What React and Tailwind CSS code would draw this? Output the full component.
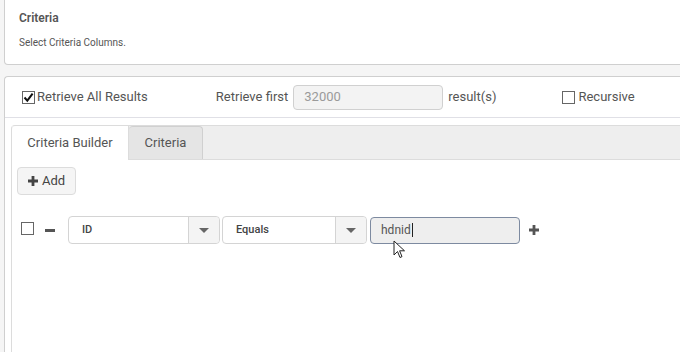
import { useState } from "react";

function Box({ checked }) {
  return (
    <span className="inline-flex h-[13px] w-[13px] shrink-0 items-center justify-center border border-[#666] bg-white">
      {checked && (
        <svg width="11" height="11" viewBox="0 0 11 11">
          <path d="M1.5 5.5 L4.3 8.6 L9.6 1.6" fill="none" stroke="#111" strokeWidth="2" />
        </svg>
      )}
    </span>
  );
}

function Caret() {
  return (
    <svg width="10" height="5" viewBox="0 0 10 5">
      <path d="M0 0 L10 0 L5 5 Z" fill="#666" />
    </svg>
  );
}

function Select({ label, width }) {
  return (
    <div
      className="flex h-[28px] items-stretch rounded-[4px] border border-[#d4d4d4] bg-white"
      style={{ width }}
    >
      <div className="flex flex-1 items-center pl-[13px] text-[11px] font-medium text-[#444]">{label}</div>
      <div className="flex w-[31px] items-center justify-center border-l border-[#d4d4d4] bg-[#f4f4f4] rounded-r-[4px]">
        <Caret />
      </div>
    </div>
  );
}

export default function App() {
  const [all, setAll] = useState(true);

  return (
    <div
      className="relative h-[352px] w-[680px] overflow-hidden bg-[#f5f5f5] text-[#555]"
      style={{ fontFamily: "Roboto, 'Liberation Sans', sans-serif" }}
    >
      {/* header card */}
      <div className="ml-[4px] mr-[-20px] h-[65px] rounded-b-[4px] border-x border-b border-[#cfcfcf] bg-white px-[14px] pt-[10px]">
        <div className="text-[12px] font-semibold leading-[16px] text-[#555]">Criteria</div>
        <div className="mt-[10px] text-[10px] leading-[14px] text-[#555]">Select Criteria Columns.</div>
      </div>

      {/* main card */}
      <div className="ml-[4px] mr-[-20px] mt-[11px] h-[300px] rounded-tl-[4px] border-l border-t border-[#cfcfcf] bg-white">
        <div className="flex h-[41px] items-center border-b border-[#e0e0e6] text-[13px] text-[#555]">
          <label className="ml-[17px] flex items-center gap-[2px]" onClick={() => setAll(!all)}>
            <Box checked={all} />
            <span>Retrieve All Results</span>
          </label>
          <span className="ml-[68px]">Retrieve first</span>
          <div className="ml-[5px] flex h-[25px] w-[150px] items-center rounded-[4px] border border-[#d0d0d0] bg-[#f3f3f3] pl-[10px] text-[#9a9a9a]">
            32000
          </div>
          <span className="ml-[5px] text-[#555]">result(s)</span>
          <label className="ml-[66px] flex items-center gap-[3px]">
            <Box checked={false} />
            <span>Recursive</span>
          </label>
        </div>

        {/* tabs container */}
        <div className="ml-[6px] mt-[7px] h-[260px] rounded-tl-[4px] border-l border-t border-[#dcdcdc]">
          <div className="flex h-[34px] border-b border-[#dcdcdc] bg-[#eeeeee]">
            <div className="mb-[-1px] flex w-[117px] items-center justify-center rounded-tl-[4px] border-r border-[#dcdcdc] bg-white text-[13px] text-[#555]">
              Criteria Builder
            </div>
            <div className="flex w-[74px] items-center justify-center rounded-t-[4px] border-r border-t border-[#d0d0d0] bg-[#e5e5e5] text-[13px] text-[#555]">
              Criteria
            </div>
          </div>

          <div className="px-[5px] pt-[7px]">
            <button className="flex h-[28px] w-[59px] items-center justify-center gap-[4px] rounded-[4px] border border-[#dcdcdc] bg-[#f5f5f5] text-[13px] text-[#444]">
              <svg width="10" height="10" viewBox="0 0 10 10">
                <path d="M3.6 0 H6.4 V3.6 H10 V6.4 H6.4 V10 H3.6 V6.4 H0 V3.6 H3.6 Z" fill="#444" />
              </svg>
              Add
            </button>

            <div className="mt-[21px] flex items-center">
              <span className="ml-[4px]"><Box checked={false} /></span>
              <span className="ml-[11px] h-[3px] w-[10px] bg-[#555]" />
              <div className="ml-[13px]"><Select label="ID" width={152} /></div>
              <div className="ml-[2px]"><Select label="Equals" width={145} /></div>
              <div className="ml-[3px] flex h-[27px] w-[150px] items-center rounded-[4px] border border-[#7d8aa0] bg-[#eeeeee] pl-[10px] text-[12px] text-[#555]">
                hdnid<span className="ml-[1px] h-[14px] w-[1px] bg-[#222]" />
              </div>
              <svg className="ml-[9px]" width="10" height="10" viewBox="0 0 10 10">
                <path d="M3.6 0 H6.4 V3.6 H10 V6.4 H6.4 V10 H3.6 V6.4 H0 V3.6 H3.6 Z" fill="#555" />
              </svg>
            </div>
          </div>
        </div>
      </div>

      {/* mouse pointer */}
      <svg className="absolute left-[393px] top-[240px]" width="14" height="20" viewBox="0 0 14 20">
        <path
          d="M1 1 L1 15 L4.5 11.5 L7 17.5 L9 16.6 L6.6 10.8 L11.5 10.8 Z"
          fill="#fff"
          stroke="#222"
          strokeWidth="1"
          strokeLinejoin="round"
        />
      </svg>
    </div>
  );
}
